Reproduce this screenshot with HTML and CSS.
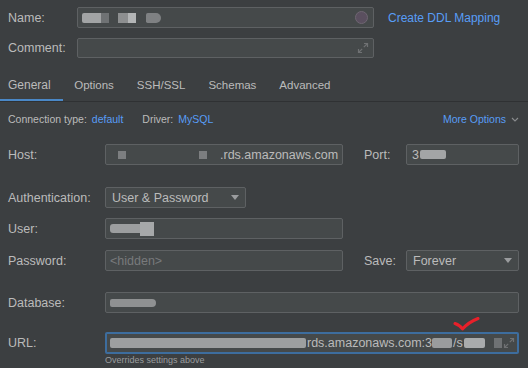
FILE: index.html
```html
<!DOCTYPE html>
<html lang="en">
<head>
    <meta charset="UTF-8">
    <title>Data Source</title>
    <link rel="stylesheet" href="styles.css">
</head>
<body>

    <!-- Name / Comment -->
    <div class="head">
        <div class="row name-row">
            <label class="lbl">Name:</label>
            <div class="field name-field">
                <span class="blur b1"></span><span class="blur b2"></span><span class="blur b3"></span><span class="blur b3b"></span><span class="blur b4"></span>
                <span class="color-dot"></span>
            </div>
            <a class="link ddl" href="#">Create DDL Mapping</a>
        </div>
        <div class="row comment-row">
            <label class="lbl">Comment:</label>
            <div class="field comment-field">
                <svg class="expand" width="12" height="12" viewBox="0 0 12 12"><path d="M7 1.5h3.5v3.5M10.5 1.5L6.8 5.2M5 10.5H1.5V7M1.5 10.5l3.7-3.7" fill="none" stroke="#6f7173" stroke-width="1.2"/></svg>
            </div>
        </div>
    </div>

    <!-- Tabs -->
    <div class="tabs">
        <a class="tab active" href="#">General</a>
        <a class="tab" href="#">Options</a>
        <a class="tab" href="#">SSH/SSL</a>
        <a class="tab" href="#">Schemas</a>
        <a class="tab" href="#">Advanced</a>
    </div>

    <!-- Connection info -->
    <div class="conn">
        <span class="small">Connection type:</span><a class="link small" href="#">default</a>
        <span class="small driver">Driver:</span><a class="link small" href="#">MySQL</a>
        <a class="link small more" href="#">More Options <svg width="8" height="5" viewBox="0 0 8 5"><path d="M1 1l3 3 3-3" fill="none" stroke="#8a8c8e" stroke-width="1.1"/></svg></a>
    </div>

    <!-- Form -->
    <div class="form">
        <div class="frow host">
            <label class="flbl">Host:</label>
            <div class="field host-field">
                <span class="sq sq1"></span><span class="sq sq2"></span><span class="txt">.rds.amazonaws.com</span>
            </div>
            <label class="port-lbl">Port:</label>
            <div class="field port-field"><span class="txt">3</span><span class="blur p1"></span></div>
        </div>

        <div class="frow auth">
            <label class="flbl">Authentication:</label>
            <div class="field select auth-select"><span class="txt">User &amp; Password</span><span class="caret"></span></div>
        </div>

        <div class="frow user">
            <label class="flbl">User:</label>
            <div class="field user-field"><span class="blur u1"></span><span class="blur u2"></span></div>
        </div>

        <div class="frow pass">
            <label class="flbl">Password:</label>
            <div class="field pass-field"><span class="placeholder">&lt;hidden&gt;</span></div>
            <label class="save-lbl">Save:</label>
            <div class="field select save-select"><span class="txt">Forever</span><span class="caret"></span></div>
        </div>

        <div class="frow db">
            <label class="flbl">Database:</label>
            <div class="field db-field"><span class="blur d1"></span></div>
        </div>

        <div class="frow url">
            <label class="flbl">URL:</label>
            <div class="field url-field">
                <span class="blur url-blur"></span><span class="txt">rds.amazonaws.com:3</span><span class="blur url-b2"></span><span class="txt">/s</span><span class="blur url-b3"></span><span class="sq url-sq"></span><span class="cursor"></span>
                <svg class="expand" width="12" height="12" viewBox="0 0 12 12"><path d="M7 1.5h3.5v3.5M10.5 1.5L6.8 5.2M5 10.5H1.5V7M1.5 10.5l3.7-3.7" fill="none" stroke="#6f7173" stroke-width="1.2"/></svg>
                <svg class="check" width="28" height="18" viewBox="0 0 28 18"><path d="M2 6.5c3 1 5.5 2.5 7.5 5.5c4-4.5 9-8 15.5-10.5" fill="none" stroke="#e8202a" stroke-width="3" stroke-linecap="round" stroke-linejoin="round"/></svg>
            </div>
        </div>
        <div class="hint">Overrides settings above</div>
    </div>

</body>
</html>
```

FILE: styles.css
```css
/* General styles */
body {
    margin: 0;
    width: 528px;
    height: 368px;
    overflow: hidden;
    background-color: #3c3f41;
    color: #bbbbbb;
    font-family: 'Liberation Sans', Arial, sans-serif;
    font-size: 12.5px;
}
a {
    text-decoration: none;
}
.link {
    color: #589df6;
}

/* Inputs */
.field {
    position: relative;
    display: flex;
    align-items: center;
    flex-shrink: 0;
    box-sizing: border-box;
    min-width: 0;
    height: 21px;
    padding: 0 4px;
    background-color: #45494a;
    border: 1px solid #5e6163;
    border-radius: 2px;
    white-space: nowrap;
}
.txt {
    color: #bbbbbb;
}
.placeholder {
    color: #787a7c;
}
.blur {
    display: inline-block;
    flex-shrink: 0;
    height: 10px;
    background-color: #8f9192;
    border-radius: 2px;
}
.sq {
    display: inline-block;
    flex-shrink: 0;
    width: 8px;
    height: 8px;
    background-color: #7c7e80;
}
.select .caret {
    margin-left: auto;
    margin-right: 2px;
    border-left: 4px solid transparent;
    border-right: 4px solid transparent;
    border-top: 5px solid #9a9c9e;
}
.expand {
    margin-left: auto;
    flex-shrink: 0;
}

/* Head */
.head {
    padding: 7px 0 0 8px;
}
.row {
    display: flex;
    align-items: center;
}
.lbl {
    width: 69px;
    flex-shrink: 0;
}
.name-field, .comment-field {
    width: 297px;
}
.name-row {
    height: 21px;
}
.comment-row {
    margin-top: 10px;
    height: 20px;
}
.comment-field {
    height: 20px;
    padding-right: 4px;
}
.name-field .b1 { width: 19px; background-color: #a2a4a5; border-radius: 2px 0 0 2px; }
.name-field .b2 { width: 8px; background-color: #6f7274; border-radius: 0; }
.name-field .b3 { width: 10px; margin-left: 9px; background-color: #8d8f90; border-radius: 0; }
.name-field .b3b { width: 8px; background-color: #b3b5b6; border-radius: 0; }
.name-field .b4 { width: 15px; margin-left: 10px; background-color: #7f8183; border-radius: 2px 6px 6px 2px; }
.color-dot {
    margin-left: auto;
    width: 13px;
    height: 13px;
    border-radius: 50%;
    background-color: #5a4f5f;
    border: 1px solid #6e6672;
    box-sizing: border-box;
    margin-right: 1px;
}
.ddl {
    margin-left: 14px;
    font-size: 12px;
}

/* Tabs */
.tabs {
    display: flex;
    margin-top: 13px;
    border-bottom: 1px solid #2f3133;
    height: 30px;
}
.tab {
    color: #bbbbbb;
    font-size: 11.5px;
    padding: 0 11.5px;
    line-height: 29px;
    border-bottom: 2px solid transparent;
}
.tab:first-child {
    padding-left: 8px;
    padding-right: 12px;
    font-size: 12px;
}
.tab.active {
    border-bottom-color: #4a88c7;
}

/* Connection row */
.conn {
    display: flex;
    align-items: center;
    padding: 0 9px 0 8px;
    height: 34px;
}
.small {
    font-size: 10.5px;
}
.conn .link {
    margin-left: 5px;
}
.conn .driver {
    margin-left: 19px;
}
.conn .more {
    margin-left: auto;
    display: flex;
    align-items: center;
    gap: 5px;
}

/* Form */
.form {
    padding: 0 9px 0 8px;
}
.frow {
    display: flex;
    align-items: center;
}
.flbl {
    width: 97px;
    flex-shrink: 0;
}
.host { margin-top: 8px; }
.auth { margin-top: 22px; }
.user { margin-top: 10px; }
.pass { margin-top: 11px; }
.db { margin-top: 21px; }
.url { margin-top: 19px; }

.host-field, .user-field, .pass-field {
    width: 238px;
}
.host-field .sq1 { margin-left: 8px; }
.host-field .sq2 { margin-left: 73px; }
.host-field .txt { margin-left: 13px; }
.port-lbl, .save-lbl {
    margin-left: 21px;
}
.port-field, .save-select {
    width: 113px;
    margin-left: auto;
}
.port-field { padding-left: 5px; }
.port-field .p1 { width: 26px; height: 9px; background-color: #a3a5a6; margin-left: 1px; }
.auth-select {
    width: 141px;
    padding-left: 6px;
}
.save-select { padding-left: 6px; }
.user-field .u1 { width: 30px; height: 9px; background-color: #9c9e9f; border-radius: 3px 0 0 3px; }
.user-field .u2 { width: 14px; height: 14px; background-color: #a6a8a9; border-radius: 0; }
.db-field, .url-field {
    flex: 1;
}
.db-field .d1 { width: 46px; height: 8px; border-radius: 3px 6px 6px 3px; }
.url-field {
    height: 22px;
    border: 2px solid #3d6d9e;
    padding: 0 4px 0 3px;
}
.url-blur { width: 196px; background-color: #9d9fa0; margin-right: 1px; }
.url-b2 { width: 20px; margin: 0 1px 0 0; background-color: #9a9c9d; }
.url-b3 { width: 21px; margin-left: 1px; background-color: #a9abac; }
.url-sq { margin-left: 9px; width: 8px; height: 10px; background-color: #6f7274; }
.cursor {
    width: 1px;
    height: 14px;
    margin-left: 1px;
    background-color: #bbbbbb;
}
.check {
    position: absolute;
    left: 346px;
    top: -17px;
}
.hint {
    margin-left: 97px;
    margin-top: 1px;
    font-size: 9px;
    color: #9a9c9e;
}
```
